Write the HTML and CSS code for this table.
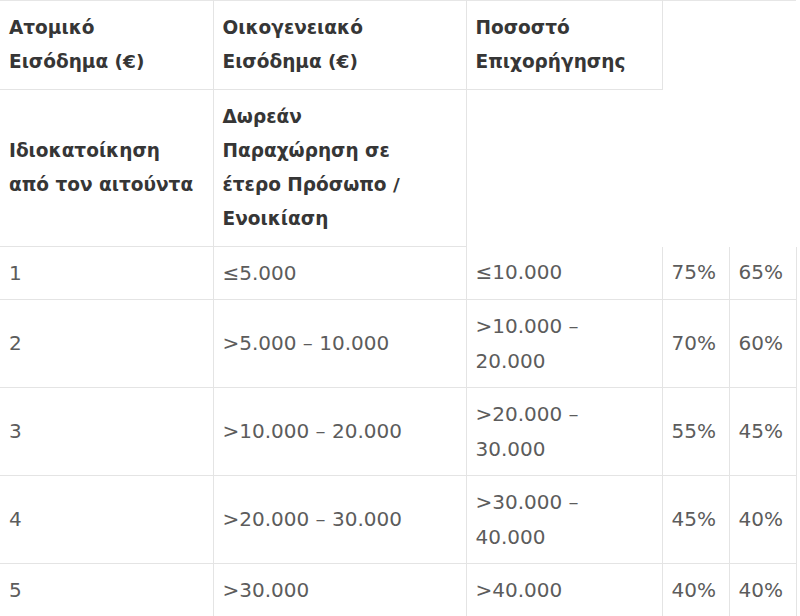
FILE: index.html
```html
<!DOCTYPE html>
<html lang="el">
<head>
<meta charset="utf-8">
<link rel="stylesheet" href="styles.css">
</head>
<body>
<table class="grant-table">
  <colgroup>
    <col class="c1"><col class="c2"><col class="c3"><col class="c4"><col class="c5">
  </colgroup>
  <tbody>
    <tr class="head">
      <td>Ατομικό<br>Εισόδημα (€)</td>
      <td>Οικογενειακό<br>Εισόδημα (€)</td>
      <td>Ποσοστό<br>Επιχορήγησης</td>
    </tr>
    <tr class="head">
      <td>Ιδιοκατοίκηση<br>από τον αιτούντα</td>
      <td>Δωρεάν<br>Παραχώρηση σε<br>έτερο Πρόσωπο /<br>Ενοικίαση</td>
    </tr>
    <tr>
      <td>1</td><td>≤5.000</td><td>≤10.000</td><td>75%</td><td>65%</td>
    </tr>
    <tr>
      <td>2</td><td>&gt;5.000 – 10.000</td><td>&gt;10.000 –<br>20.000</td><td>70%</td><td>60%</td>
    </tr>
    <tr>
      <td>3</td><td>&gt;10.000 – 20.000</td><td>&gt;20.000 –<br>30.000</td><td>55%</td><td>45%</td>
    </tr>
    <tr>
      <td>4</td><td>&gt;20.000 – 30.000</td><td>&gt;30.000 –<br>40.000</td><td>45%</td><td>40%</td>
    </tr>
    <tr>
      <td>5</td><td>&gt;30.000</td><td>&gt;40.000</td><td>40%</td><td>40%</td>
    </tr>
  </tbody>
</table>
</body>
</html>
```

FILE: styles.css
```css
html, body {
  margin: 0;
  padding: 0;
  background: #ffffff;
}

.grant-table {
  border-collapse: collapse;
  table-layout: fixed;
  width: 796px;
  border-top: 1px solid #e6e6e6;
  font-family: "DejaVu Sans", Verdana, sans-serif;
  font-size: 20px;
  line-height: 35px;
  color: #5c5c5c;
}

.c1 { width: 213px; }
.c2 { width: 253px; }
.c3 { width: 196px; }
.c4 { width: 67px; }
.c5 { width: 67px; }

.grant-table td {
  padding: 8.5px 9px;
  vertical-align: middle;
  text-align: left;
  border-right: 1px solid #e4e4e4;
  border-bottom: 1px solid #e4e4e4;
}

.grant-table .head td {
  padding: 10px 9px;
  font-size: 18.5px;
  line-height: 34px;
  font-weight: bold;
  color: #363636;
}
```
